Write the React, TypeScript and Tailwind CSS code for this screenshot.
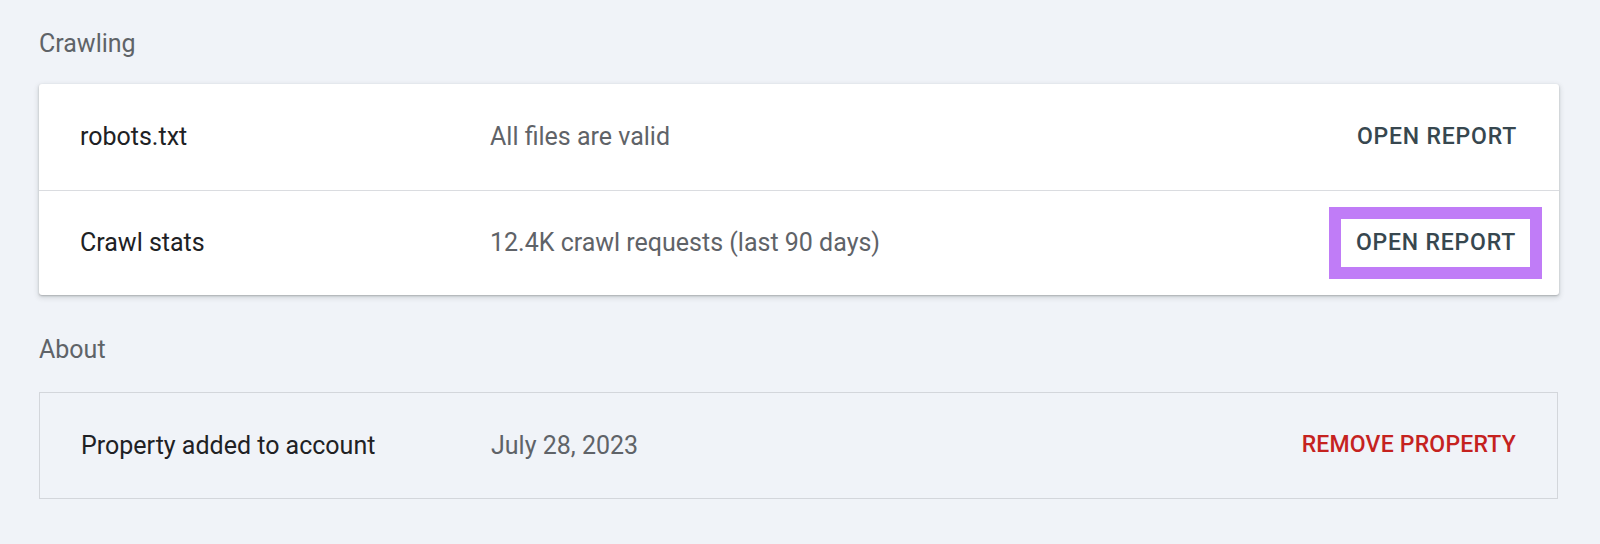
const font = { fontFamily: 'Roboto, "Noto Sans", sans-serif' };

type Row = { label: string; value: string; action: string; highlight?: boolean };

const crawlRows: Row[] = [
  { label: 'robots.txt', value: 'All files are valid', action: 'OPEN REPORT' },
  { label: 'Crawl stats', value: '12.4K crawl requests (last 90 days)', action: 'OPEN REPORT', highlight: true },
];

export default function App() {
  return (
    <div className="w-[1600px] h-[544px] bg-[#f0f3f8] pl-[39px] pr-[41px] pt-[29px]" style={font}>
      {/* Crawling */}
      <h2 className="text-[25px] leading-[30px] text-[#5f6368] mb-[25px]">Crawling</h2>
      <div className="bg-white rounded-[3px] shadow-[0_1px_2px_rgba(60,64,67,0.3),0_2px_5px_1px_rgba(60,64,67,0.15)]">
        {crawlRows.map((row, i) => (
          <div
            key={row.label}
            className={`flex items-center pl-[41px] pr-[42px] ${i > 0 ? 'h-[105px] border-t border-[#dadce0]' : 'h-[106px]'}`}
          >
            <div className="w-[410px] text-[25px] text-[#202124]">{row.label}</div>
            <div className="flex-1 text-[25px] text-[#5f6368]">{row.value}</div>
            {row.highlight ? (
              <div className="-mr-[25px] border-[12px] border-[#c07cf7] bg-white pl-[15px] pr-[14px] py-[10px]">
                <span className="block text-[23px] leading-[28px] font-medium tracking-[0.8px] text-[#37474f]">{row.action}</span>
              </div>
            ) : (
              <span className="text-[23px] leading-[28px] font-medium tracking-[0.8px] text-[#37474f]">{row.action}</span>
            )}
          </div>
        ))}
      </div>

      {/* About */}
      <h2 className="text-[25px] leading-[30px] text-[#5f6368] mt-[40px] mb-[27px]">About</h2>
      <div className="flex items-center h-[107px] border border-[#d3d6db] pl-[41px] pr-[41px] mr-[1px]">
        <div className="w-[410px] text-[25px] text-[#202124]">Property added to account</div>
        <div className="flex-1 text-[25px] text-[#5f6368]">July 28, 2023</div>
        <span className="text-[23px] font-medium tracking-[0.2px] text-[#c5221f]">REMOVE PROPERTY</span>
      </div>
    </div>
  );
}
